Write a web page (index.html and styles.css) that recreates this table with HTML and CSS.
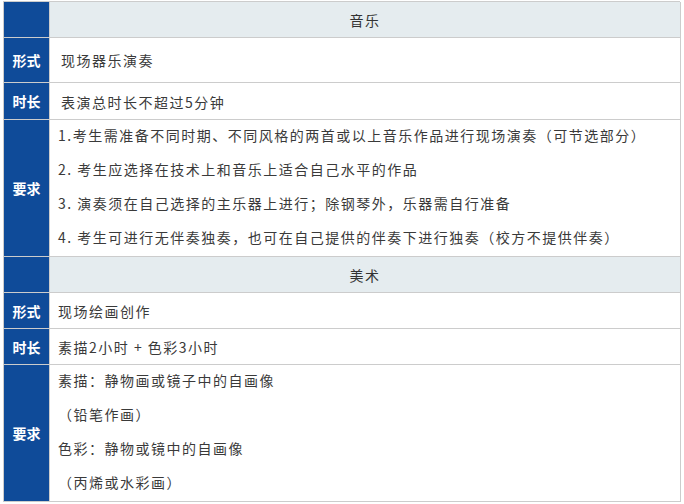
FILE: index.html
```html
<!DOCTYPE html>
<html lang="zh">
<head>
<meta charset="utf-8">
<link rel="stylesheet" href="styles.css">
</head>
<body>
<div class="sheet">
  <div class="lab h36"></div>
  <div class="head h36">音乐</div>

  <div class="lab h45">形式</div>
  <div class="val h45 wide">现场器乐演奏</div>

  <div class="lab h37">时长</div>
  <div class="val h37 wide low">表演总时长不超过5分钟</div>

  <div class="lab h137">要求</div>
  <div class="val h137 list">
    <p>1.考生需准备不同时期、不同风格的两首或以上音乐作品进行现场演奏（可节选部分）</p>
    <p>2. 考生应选择在技术上和音乐上适合自己水平的作品</p>
    <p>3. 演奏须在自己选择的主乐器上进行；除钢琴外，乐器需自行准备</p>
    <p>4. 考生可进行无伴奏独奏，也可在自己提供的伴奏下进行独奏（校方不提供伴奏）</p>
  </div>

  <div class="lab h36"></div>
  <div class="head h36">美术</div>

  <div class="lab h36">形式</div>
  <div class="val h36">现场绘画创作</div>

  <div class="lab h36">时长</div>
  <div class="val h36">素描2小时 + 色彩3小时</div>

  <div class="lab h137">要求</div>
  <div class="val h137 list">
    <p>素描：静物画或镜子中的自画像</p>
    <p>（铅笔作画）</p>
    <p>色彩：静物或镜中的自画像</p>
    <p>（丙烯或水彩画）</p>
  </div>
</div>
</body>
</html>
```
FILE: styles.css
```css
html, body {
  margin: 0;
  padding: 0;
  background: #ffffff;
}
body {
  padding: 1px 0 0 3px;
  font-family: "Noto Sans CJK SC", "Noto Sans", sans-serif;
}
.sheet {
  display: grid;
  grid-template-columns: 46px 631px;
  width: 677px;
  border-top: 1px solid #cccccc;
  border-left: 1px solid #cccccc;
  box-sizing: border-box;
}
.sheet > div {
  border-right: 1px solid #cccccc;
  border-bottom: 1px solid #cccccc;
  box-sizing: border-box;
}
.h36 { height: 36px; }
.h37 { height: 37px; }
.h45 { height: 45px; }
.h137 { height: 137px; }
.lab {
  background: #0f4b99;
  color: #ffffff;
  font-weight: bold;
  font-size: 14px;
  display: flex;
  align-items: center;
  justify-content: center;
}
.head {
  background: #e5ecef;
  color: #333333;
  font-size: 14px;
  letter-spacing: 1.5px;
  display: flex;
  align-items: center;
  justify-content: center;
}
.val {
  color: #3a3a3a;
  font-size: 14px;
  letter-spacing: 1.5px;
  display: flex;
  align-items: center;
  padding-left: 8px;
}
.val.wide { padding-left: 11px; }
.val.low { padding-top: 2px; }
.list {
  flex-direction: column;
  align-items: flex-start;
  justify-content: flex-start;
  padding-top: 0;
}
.list p {
  margin: 0;
  line-height: 34px;
  white-space: nowrap;
}
.list p:first-child {
  margin-top: -2px;
}
```
